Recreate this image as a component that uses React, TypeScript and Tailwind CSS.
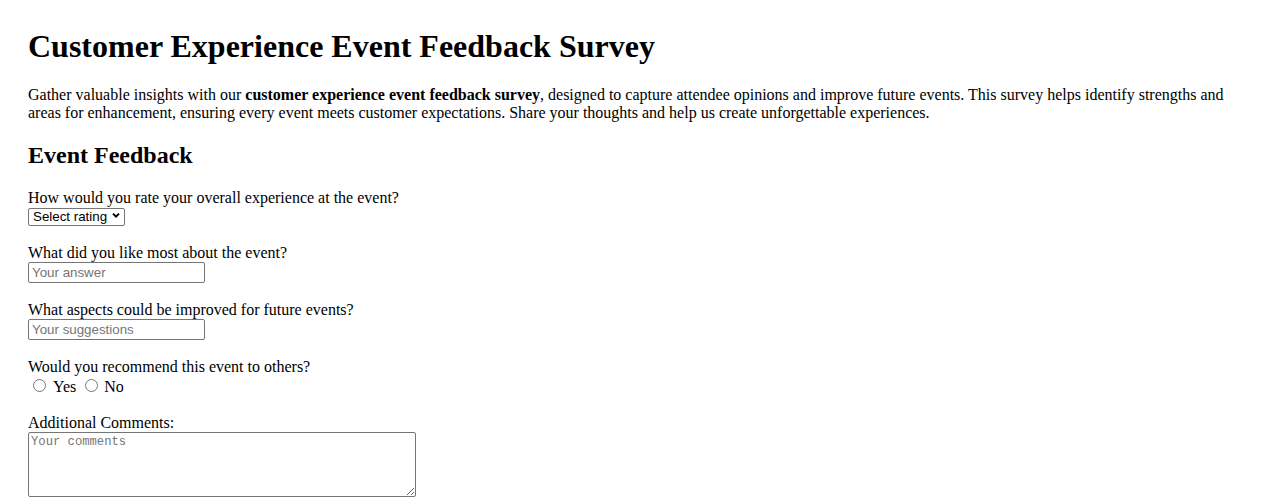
function Chevron() {
  return (
    <svg
      className="pointer-events-none absolute right-[5px] top-[4px]"
      width="8"
      height="7"
      viewBox="0 0 8 7"
      aria-hidden="true"
    >
      <path d="M1 1.6 L4 4.6 L7 1.6" fill="none" stroke="#000" strokeWidth="2" />
    </svg>
  )
}

function Field({ label, children }: { label: string; children: React.ReactNode }) {
  return (
    <div className="flex flex-col items-start">
      <label className="block leading-[18px]">{label}</label>
      {children}
    </div>
  )
}

const inputCls =
  'block w-[177px] h-[21px] border border-[#767676] rounded-[2px] bg-white px-[3px] text-[13.33px] leading-[17px] placeholder:text-[#757575] outline-none'

export default function App() {
  return (
    <div
      className="min-h-screen bg-white px-[28px] pt-[28px] pb-[28px] text-[16px] text-black"
      style={{ fontFamily: '"Liberation Serif", "Times New Roman", serif' }}
    >
      <h1 className="text-[32px] font-bold leading-[37px]">Customer Experience Event Feedback Survey</h1>
      <p className="mt-[21px] leading-[18px]">
        Gather valuable insights with our <strong className="font-bold">customer experience event feedback survey</strong>,
        designed to capture attendee opinions and improve future events. This survey helps identify strengths and areas
        for enhancement, ensuring every event meets customer expectations. Share your thoughts and help us create
        unforgettable experiences.
      </p>
      <h2 className="mt-[19px] text-[24px] font-bold leading-[28px]">Event Feedback</h2>

      <form className="mt-[20px] flex flex-col gap-[18px]">
        <Field label="How would you rate your overall experience at the event?">
          <div className="relative mt-[1px] h-[18px]">
            <select
              defaultValue=""
              className="block h-[18px] w-[97px] appearance-none rounded-[2px] border border-[#767676] bg-white pl-[4px] text-[13.33px] leading-[16px] outline-none"
              style={{ fontFamily: '"Liberation Sans", Arial, sans-serif' }}
            >
              <option value="">Select rating</option>
              <option value="5">Excellent</option>
              <option value="4">Good</option>
              <option value="3">Average</option>
              <option value="2">Poor</option>
              <option value="1">Very Poor</option>
            </select>
            <Chevron />
          </div>
        </Field>

        <Field label="What did you like most about the event?">
          <input
            type="text"
            placeholder="Your answer"
            className={inputCls}
            style={{ fontFamily: '"Liberation Sans", Arial, sans-serif' }}
          />
        </Field>

        <Field label="What aspects could be improved for future events?">
          <input
            type="text"
            placeholder="Your suggestions"
            className={inputCls}
            style={{ fontFamily: '"Liberation Sans", Arial, sans-serif' }}
          />
        </Field>

        <Field label="Would you recommend this event to others?">
          <div className="flex h-[20px] items-start">
            <input type="radio" name="recommend" className="ml-[5px] mr-[3px] mt-[3px] h-[13px] w-[13px]" />
            <span className="ml-[4px] mt-[2px] leading-[18px]">Yes</span>
            <input type="radio" name="recommend" className="ml-[9px] mr-[3px] mt-[3px] h-[13px] w-[13px]" />
            <span className="ml-[3px] mt-[2px] leading-[18px]">No</span>
          </div>
        </Field>

        <Field label="Additional Comments:">
          <textarea
            placeholder="Your comments"
            className="block h-[65px] w-[388px] rounded-[2px] border border-[#767676] bg-white px-[2px] py-[2px] text-[12.2px] leading-[15px] placeholder:text-[#757575] outline-none"
            style={{ fontFamily: '"Liberation Mono", "DejaVu Sans Mono", monospace' }}
          />
        </Field>
      </form>
    </div>
  )
}
